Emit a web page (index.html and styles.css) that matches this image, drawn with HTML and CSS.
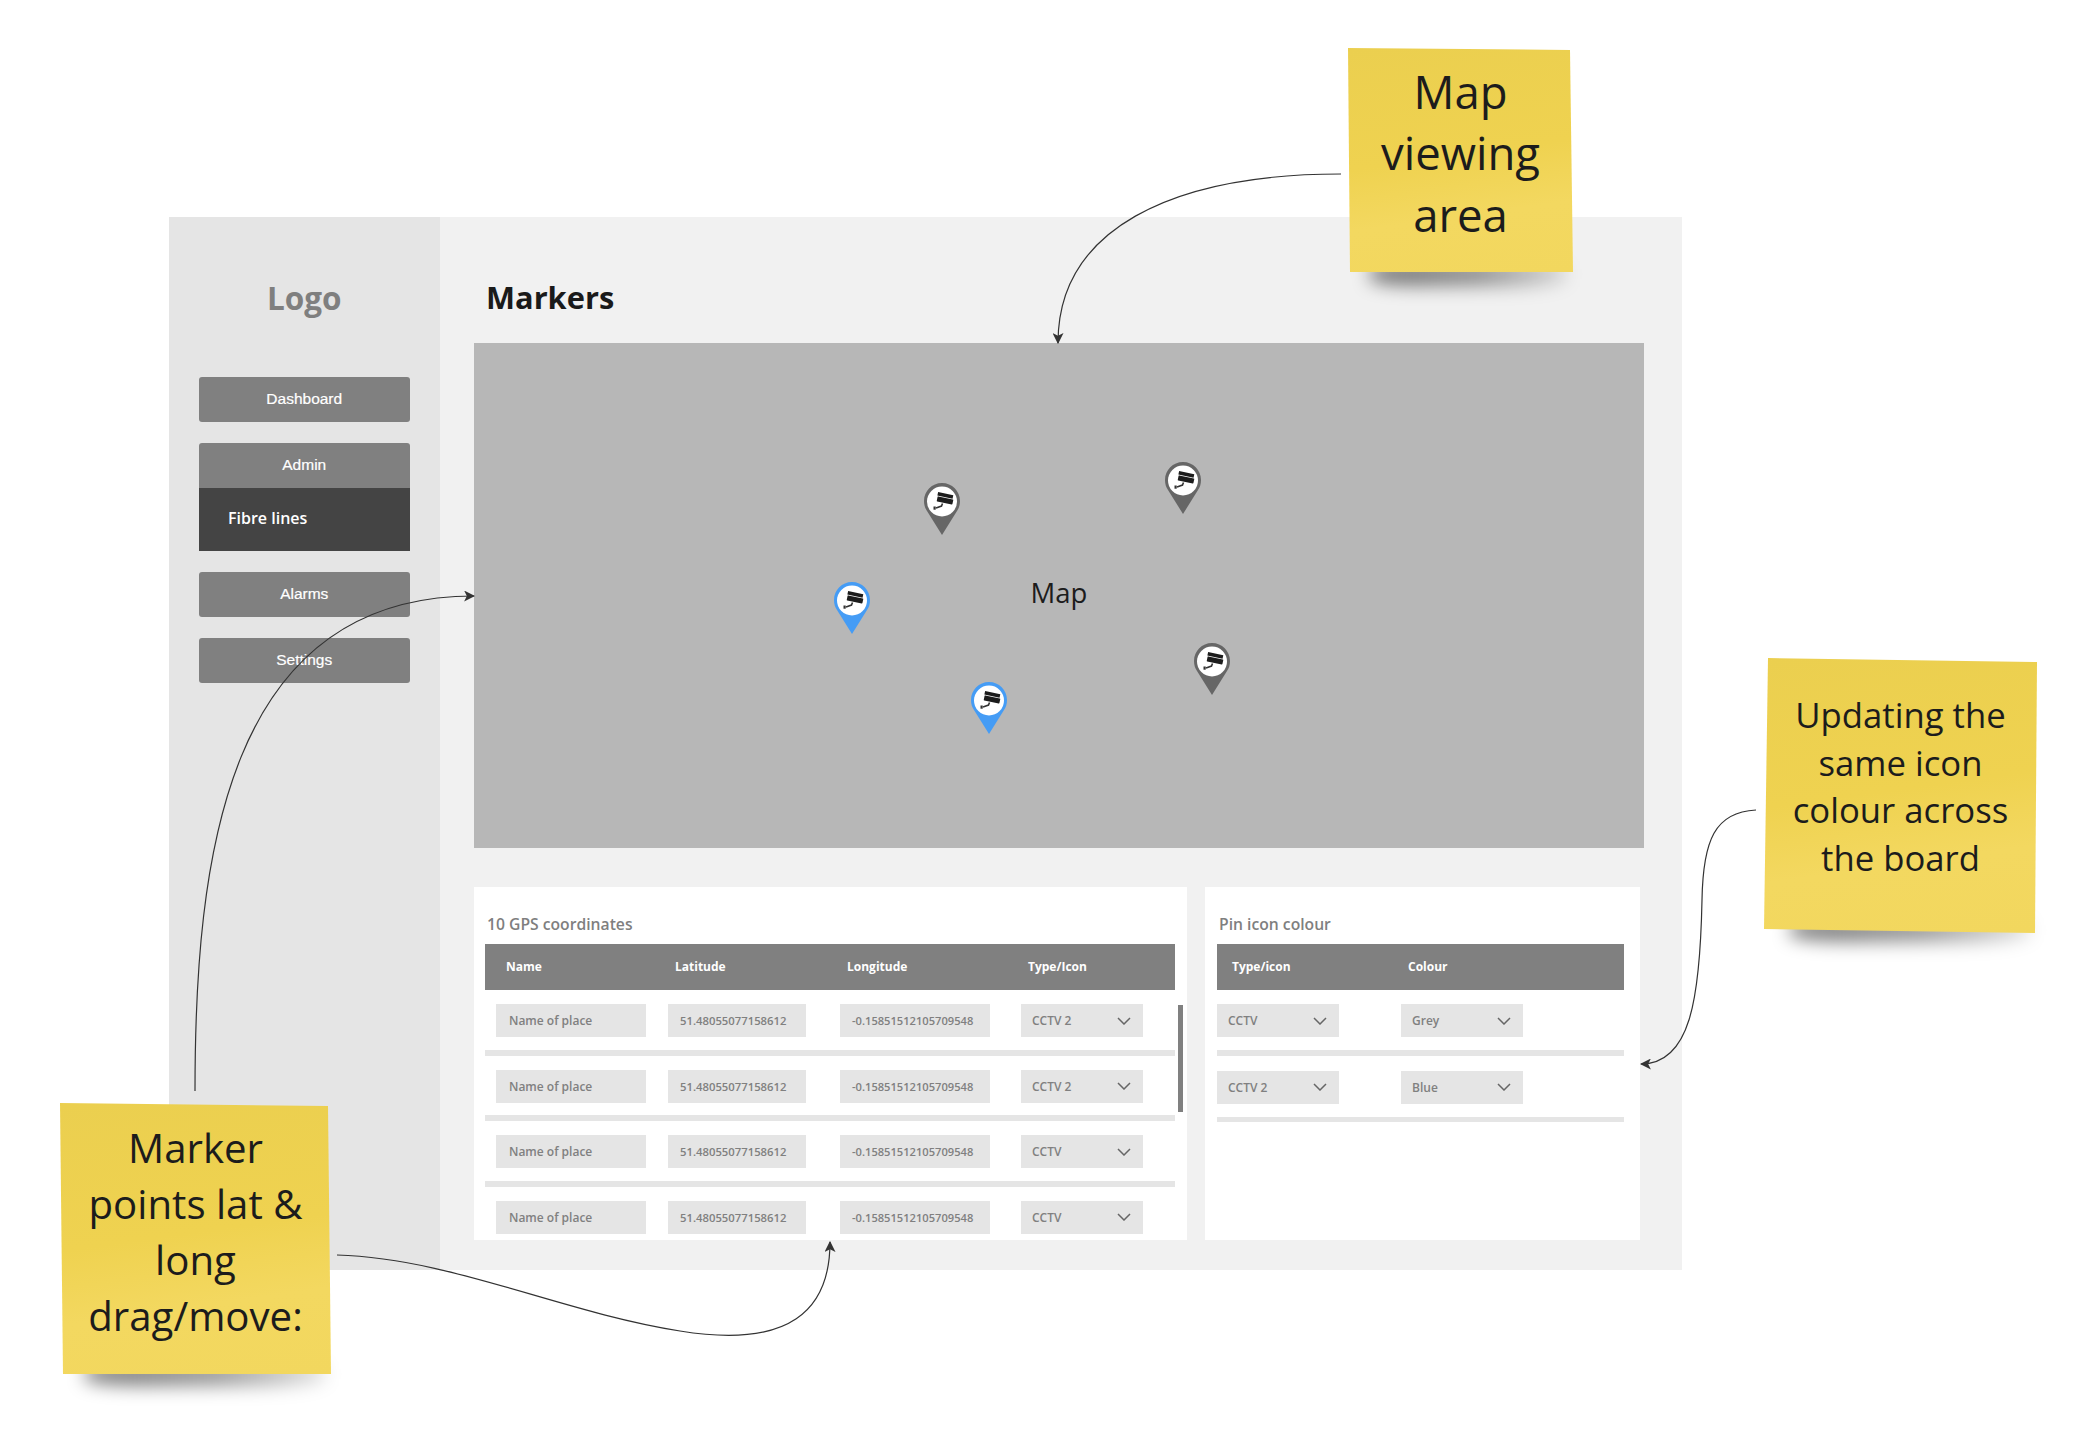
FILE: index.html
```html
<!DOCTYPE html>
<html>
<head>
	<meta charset="utf-8">
	<title>Markers</title>
	<link rel="stylesheet" href="styles.css">
</head>
<body>

	<svg class="defs" width="0" height="0">
		<symbol id="pin" viewBox="0 0 36 52">
			<path fill="currentColor" d="M18 0C8 0 0 8 0 18c0 4 1 7 3 10l15 24 15-24c2-3 3-6 3-10C36 8 28 0 18 0z"/>
			<circle cx="18" cy="18.5" r="15" fill="#fff"/>
			<g fill="#1c1c1c" transform="rotate(12 20 15)">
				<rect x="13" y="10.3" width="15.5" height="3.6"/>
				<rect x="13.5" y="14.6" width="16" height="5.2" rx="0.6"/>
			</g>
			<path fill="none" stroke="#333" stroke-width="1.6" d="M18.5 20.5l-1 2.5-5.5 2"/>
			<rect x="9.5" y="23.5" width="2.2" height="3.2" fill="#333"/>
		</symbol>
		<symbol id="chevron" viewBox="0 0 14 8">
			<path fill="none" stroke="#666" stroke-width="1.5" d="M1 1l6 6 6-6"/>
		</symbol>
	</svg>

	<div class="frame">
		<div class="sidebar">
			<div class="logo">Logo</div>
			<div class="nav-btn">Dashboard</div>
			<div class="nav-btn nav-admin">Admin</div>
			<div class="nav-sub">Fibre lines</div>
			<div class="nav-btn">Alarms</div>
			<div class="nav-btn">Settings</div>
		</div>

		<div class="main">
			<h1 class="page-title">Markers</h1>

			<div class="map">
				<span class="map-label">Map</span>
				<svg class="pin pin-grey pin-1"><use href="#pin"/></svg>
				<svg class="pin pin-grey pin-2"><use href="#pin"/></svg>
				<svg class="pin pin-blue pin-3"><use href="#pin"/></svg>
				<svg class="pin pin-blue pin-4"><use href="#pin"/></svg>
				<svg class="pin pin-grey pin-5"><use href="#pin"/></svg>
			</div>

			<div class="panels">
				<div class="panel panel-coords">
					<div class="panel-title">10 GPS coordinates</div>
					<div class="table-head coords-grid">
						<span class="head-name">Name</span>
						<span>Latitude</span>
						<span>Longitude</span>
						<span>Type/Icon</span>
					</div>
					<div class="row coords-grid">
						<div class="field field-name">Name of place</div>
						<div class="field field-lat">51.48055077158612</div>
						<div class="field field-lon">-0.15851512105709548</div>
						<div class="field field-select">CCTV 2<svg class="chevron"><use href="#chevron"/></svg></div>
					</div>
					<div class="row coords-grid">
						<div class="field field-name">Name of place</div>
						<div class="field field-lat">51.48055077158612</div>
						<div class="field field-lon">-0.15851512105709548</div>
						<div class="field field-select">CCTV 2<svg class="chevron"><use href="#chevron"/></svg></div>
					</div>
					<div class="row coords-grid">
						<div class="field field-name">Name of place</div>
						<div class="field field-lat">51.48055077158612</div>
						<div class="field field-lon">-0.15851512105709548</div>
						<div class="field field-select">CCTV<svg class="chevron"><use href="#chevron"/></svg></div>
					</div>
					<div class="row coords-grid">
						<div class="field field-name">Name of place</div>
						<div class="field field-lat">51.48055077158612</div>
						<div class="field field-lon">-0.15851512105709548</div>
						<div class="field field-select">CCTV<svg class="chevron"><use href="#chevron"/></svg></div>
					</div>
					<div class="scrollbar"></div>
				</div>

				<div class="panel panel-colour">
					<div class="panel-title">Pin icon colour</div>
					<div class="table-head colour-grid">
						<span class="head-type">Type/icon</span>
						<span>Colour</span>
					</div>
					<div class="row colour-grid">
						<div class="field field-select">CCTV<svg class="chevron"><use href="#chevron"/></svg></div>
						<div class="field field-select">Grey<svg class="chevron"><use href="#chevron"/></svg></div>
					</div>
					<div class="row row-second colour-grid">
						<div class="field field-select">CCTV 2<svg class="chevron"><use href="#chevron"/></svg></div>
						<div class="field field-select">Blue<svg class="chevron"><use href="#chevron"/></svg></div>
					</div>
				</div>
			</div>
		</div>
	</div>

	<!-- annotations on top of the wireframe -->
	<svg class="arrows" width="2090" height="1434">
		<defs>
			<marker id="head" viewBox="0 0 10 10" refX="9" refY="5" markerWidth="11" markerHeight="11" markerUnits="userSpaceOnUse" orient="auto">
				<path d="M0 0l10 5-10 5 2.5-5z" fill="#333"/>
			</marker>
		</defs>
		<path d="M1341 174C1170 174 1058 230 1058 343"/>
		<path d="M195 1091C195 860 225 596 474 596"/>
		<path d="M337 1255C450 1258 560 1312 680 1331C790 1349 830 1310 830 1242"/>
		<path d="M1756 810C1715 812 1703 840 1702 900C1700 1000 1690 1064 1641 1064"/>
	</svg>

	<div class="note-shadow shadow-map"></div>
	<div class="note note-map">Map<br>viewing<br>area</div>

	<div class="note-shadow shadow-update"></div>
	<div class="note note-update">Updating the<br>same icon<br>colour across<br>the board</div>

	<div class="note-shadow shadow-marker"></div>
	<div class="note note-marker">Marker<br>points lat &amp;<br>long<br>drag/move:</div>

</body>
</html>
```

FILE: styles.css
```css
body
{
	margin: 0;
	width: 2090px;
	height: 1434px;
	position: relative;
	overflow: hidden;
	background: #fff;
	font-family: "Open Sans", sans-serif;
}

.defs
{
	position: absolute;
}

.frame
{
	display: flex;
	width: 1513px;
	height: 1053px;
	margin-left: 169px;
	padding-top: 217px;
}

/* sidebar */
.sidebar
{
	width: 271px;
	padding: 0 30.5px 0 30px;
	box-sizing: border-box;
	background: #e5e5e5;
}

.logo
{
	height: 160px;
	padding-top: 61px;
	box-sizing: border-box;
	line-height: 40px;
	text-align: center;
	font-size: 31.5px;
	font-weight: 700;
	color: #7f7f7f;
}

.nav-btn
{
	height: 45px;
	margin-bottom: 21px;
	border-radius: 3px;
	background: #808080;
	color: #fff;
	font: 15.5px/43px "Liberation Sans", sans-serif;
	-webkit-text-stroke: 0.2px #fff;
	text-align: center;
}

.nav-admin
{
	margin-bottom: 0;
	border-radius: 3px 3px 0 0;
}

.nav-sub
{
	height: 63px;
	margin-bottom: 21px;
	padding-left: 29px;
	background: #444;
	color: #fff;
	font-size: 16px;
	font-weight: 600;
	line-height: 61px;
}

/* main area */
.main
{
	flex: 1;
	padding-left: 34px;
	background: #f1f1f1;
}

.page-title
{
	margin: 0;
	height: 126px;
	padding: 60px 0 0 12px;
	box-sizing: border-box;
	font-size: 30.8px;
	font-weight: 700;
	line-height: 40px;
	color: #1a1a1a;
}

.map
{
	position: relative;
	display: flex;
	align-items: center;
	justify-content: center;
	width: 1170px;
	height: 505px;
	background: #b7b7b7;
}

.map-label
{
	margin-top: -6px;
	font-size: 27.5px;
	color: #1c1c1c;
}

.pin
{
	position: absolute;
	width: 36px;
	height: 52px;
}

.pin-grey { color: #666; }
.pin-blue { color: #459cf5; }

.pin-1 { left: 450px; top: 140px; }
.pin-2 { left: 691px; top: 119px; }
.pin-3 { left: 360px; top: 239px; }
.pin-4 { left: 497px; top: 339px; }
.pin-5 { left: 720px; top: 300px; }

/* tables under the map */
.panels
{
	display: flex;
	gap: 18px;
	margin-top: 39px;
}

.panel
{
	position: relative;
	height: 353px;
	overflow: hidden;
	box-sizing: border-box;
	background: #fff;
}

.panel-coords
{
	width: 713px;
	padding-left: 11px;
}

.panel-colour
{
	width: 435px;
	padding-left: 12px;
}

.panel-title
{
	height: 57px;
	padding: 27px 0 0 2px;
	box-sizing: border-box;
	font-size: 15.7px;
	font-weight: 600;
	line-height: 20px;
	color: #7f7f7f;
}

.coords-grid
{
	display: grid;
	grid-template-columns: 172px 172px 181px 122px;
	width: 690px;
}

.colour-grid
{
	display: grid;
	grid-template-columns: 184px 122px;
	width: 407px;
}

.table-head
{
	height: 46px;
	background: #808080;
	color: #fff;
	font-size: 12px;
	font-weight: 700;
	line-height: 46px;
}

.table-head span
{
	padding-left: 7px;
}

.coords-grid.table-head
{
	padding-left: 11px;
	width: 679px;
}

.table-head .head-name
{
	padding-left: 10px;
}

.table-head .head-type
{
	padding-left: 15px;
}

.row
{
	height: 45.5px;
	padding-top: 14px;
	border-bottom: 6px solid #e5e5e5;
}

.coords-grid.row
{
	padding-left: 11px;
	width: 679px;
}

.row-second
{
	padding-top: 15px;
	height: 46px;
	border-bottom-width: 5px;
}

.field
{
	display: flex;
	align-items: center;
	justify-content: space-between;
	height: 33px;
	padding: 0 12px;
	box-sizing: border-box;
	background: #e5e5e5;
	color: #808080;
	font-size: 12px;
	font-weight: 600;
}

.field-name
{
	width: 150px;
	padding-left: 13px;
}

.field-lat
{
	width: 138px;
	font-size: 11.3px;
}

.field-lon
{
	width: 150px;
	font-size: 11.15px;
}

.field-select
{
	width: 122px;
	padding: 0 12px 0 11px;
}

.chevron
{
	width: 14px;
	height: 8px;
}

.scrollbar
{
	position: absolute;
	left: 704px;
	top: 118px;
	width: 5px;
	height: 107px;
	background: #808080;
}

/* arrows and sticky notes */
.arrows
{
	position: absolute;
	left: 0;
	top: 0;
}

.arrows path
{
	fill: none;
	stroke: #333;
	stroke-width: 1.2;
	marker-end: url(#head);
}

.arrows marker path
{
	stroke: none;
	fill: #333;
	marker-end: none;
}

.note
{
	position: absolute;
	box-sizing: border-box;
	text-align: center;
	color: #1c1c1c;
	background: linear-gradient(172deg, #ebcf4f 0%, #efd250 48%, #f3d860 72%, #f2d75e 100%);
}

.note-map
{
	left: 1348px;
	top: 48px;
	width: 225px;
	height: 224px;
	padding-top: 12.5px;
	font-size: 45.5px;
	line-height: 61.5px;
	clip-path: polygon(0 0, 222px 2px, 225px 224px, 2px 224px);
}

.note-update
{
	left: 1764px;
	top: 658px;
	width: 273px;
	height: 275px;
	padding-top: 33px;
	font-size: 34.7px;
	line-height: 47.5px;
	clip-path: polygon(4px 0, 273px 4px, 271px 275px, 0 271px);
}

.note-marker
{
	left: 60px;
	top: 1103px;
	width: 271px;
	height: 271px;
	padding-top: 17px;
	font-size: 40.2px;
	line-height: 56px;
	clip-path: polygon(0 0, 268px 3px, 271px 271px, 3px 271px);
}

.note-shadow
{
	position: absolute;
	height: 24px;
	border-radius: 30%;
	background: linear-gradient(90deg, rgba(0, 0, 0, 0.5) 15%, rgba(0, 0, 0, 0.4) 55%, rgba(0, 0, 0, 0.12) 100%);
	filter: blur(9px);
}

.shadow-map { left: 1370px; top: 262px; width: 196px; }
.shadow-update { left: 1790px; top: 918px; width: 240px; }
.shadow-marker { left: 85px; top: 1362px; width: 240px; }
```
